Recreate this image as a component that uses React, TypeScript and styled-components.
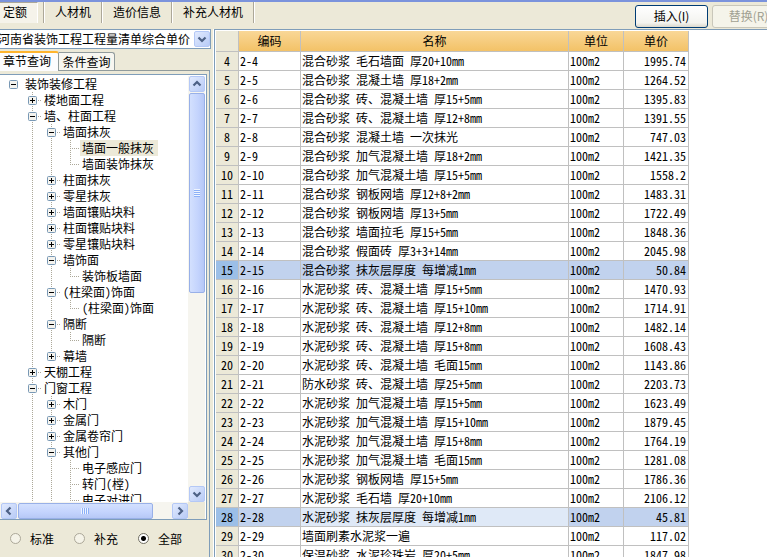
import React from 'react';
import styled, { createGlobalStyle } from 'styled-components';

const GlobalStyle = createGlobalStyle`
  * { box-sizing: border-box; }
  html, body, #root { height: 100%; }
  body { margin: 0; background: #ece9d8; overflow: hidden; }
  body, button, input, select, table {
    font: 12px/16px 'Noto Sans Mono CJK SC', 'Noto Sans CJK SC', sans-serif;
    color: #000;
  }
`;

const Page = styled.div`
  height: 100vh;
  display: flex;
  flex-direction: column;
  border-top: 2px solid #7b93dc;
  background: #ece9d8;
`;
const Toolbar = styled.header`
  height: 27px;
  flex: none;
  display: flex;
  justify-content: space-between;
  align-items: flex-start;
  overflow: hidden;
`;
const Modes = styled.nav`
  display: flex;
  flex: none;
`;
const Mode = styled.button<{ $on?: boolean }>`
  height: 21px;
  padding: 0 10px 2px 11px;
  margin: 0;
  border: 0;
  border-right: 1px solid #aca899;
  box-shadow: 1px 0 #fff;
  background: none;
  white-space: nowrap;
  ${p => p.$on && `
    width: 38px;
    padding: 0 7px 2px 0;
    margin-right: 6px;
    border-top: 1px solid #aca899;
    border-right-color: #fff;
    background: #f5f3ea;
    box-shadow: 5px 0 #ece9d8, 6px 0 #aca899, 7px 0 #fff;
  `}
`;
const Actions = styled.div`
  display: flex;
  gap: 4px;
  padding-top: 3px;
  flex: none;
  margin-right: -18px;
`;
const Action = styled.button`
  width: 73px;
  height: 23px;
  padding: 0 0 2px;
  font-family: 'Noto Sans CJK SC', sans-serif;
  border: 1px solid #003c74;
  border-radius: 3px;
  background: linear-gradient(#fff, #f3f3ef 80%, #dcd8cc);
  &:disabled {
    border-color: #c9c7ba;
    background: #f5f4ea;
    color: #a1a192;
  }
`;
const Main = styled.main`
  flex: 1;
  min-height: 0;
  display: grid;
  grid-template-columns: 214px minmax(0, 1fr);
`;
const Side = styled.aside`
  min-height: 0;
  display: flex;
  flex-direction: column;
  border-right: 1px solid #fff;
`;
const Combo = styled.div`
  height: 20px;
  width: 211px;
  flex: none;
  display: flex;
  align-items: center;
  border: 1px solid #7f9db9;
  border-left: 0;
  background: #fff;
`;
const Select = styled.select`
  flex: 1;
  min-width: 0;
  appearance: none;
  border: 0;
  padding: 0;
  margin-left: -2px;
  height: 18px;
  background: #fff;
`;
const ScrollKey = styled.span`
  width: 16px;
  height: 16px;
  flex: none;
  display: grid;
  place-items: center;
  border: 1px solid #b4c8f6;
  border-radius: 2px;
  background: linear-gradient(135deg, #e1eafe, #b8cbf6);
`;
const Tabs = styled.div`
  display: flex;
  align-items: flex-end;
  height: 20px;
  margin-top: 1px;
  flex: none;
`;
const Tab = styled.button<{ $on?: boolean }>`
  height: ${p => (p.$on ? 20 : 18)}px;
  width: ${p => (p.$on ? 59 : 56)}px;
  padding: 0;
  margin-bottom: ${p => (p.$on ? -1 : 0)}px;
  border: 1px solid #919b9c;
  border-bottom: 0;
  border-left-width: 0;
  border-radius: 0 3px 0 0;
  background: #f7f6f0;
  white-space: nowrap;
  position: relative;
  ${p => p.$on && `
    border-top: 2px solid #ffb52e;
    padding: 0 4px 2px 0;
    background: #fcfcfe;
  `}
`;
const Pane = styled.div`
  flex: 1;
  min-height: 0;
  width: 210px;
  display: flex;
  flex-direction: column;
  border-top: 1px solid #919b9c;
  border-right: 1px solid #7f9db9;
  padding: 3px 2px 0 0;
`;
const TreeBox = styled.div`
  flex: 1;
  min-height: 0;
  display: grid;
  grid-template: minmax(0, 1fr) 17px / minmax(0, 1fr) 17px;
  border: 1px solid #7f9db9;
  border-left: 0;
  background: #fff;
  padding: 1px 1px 0 0;
`;
const Tree = styled.ul`
  list-style: none;
  margin: 0;
  padding: 0;
  overflow: hidden;
`;
const Node = styled.li<{ $sel?: boolean }>`
  height: 16px;
  display: flex;
  align-items: center;
  white-space: nowrap;
  span { background: ${p => (p.$sel ? '#ece9d8' : 'none')}; padding: 0 4px 0 2px; }
  svg { flex: none; }
`;
const Track = styled.div<{ $row?: boolean }>`
  display: flex;
  flex-direction: ${p => (p.$row ? 'row' : 'column')};
  align-items: center;
  background: #f6f5ef;
  padding-left: ${p => (p.$row ? 1 : 0)}px;
`;
const Thumb = styled.div<{ $row?: boolean; $size: number }>`
  flex: 0 1 ${p => p.$size}%;
  ${p => (p.$row ? 'height' : 'width')}: 16px;
  display: grid;
  place-items: center;
  margin: ${p => (p.$row ? '0 1px' : '1px 0')};
  border: 1px solid #98b0e8;
  border-radius: 2px;
  background: linear-gradient(${p => (p.$row ? '180deg' : '90deg')}, #d3e0fe, #c3d3fd 60%, #b6c8f6);
`;
const Spacer = styled.div`
  flex: 1;
`;
const Corner = styled.div`
  background: #ece9d8;
`;
const Filters = styled.div`
  height: 37px;
  flex: none;
  display: flex;
  align-items: center;
  gap: 20px;
  padding-left: 10px;
  label { display: flex; align-items: center; gap: 9px; }
`;
const Radio = styled.input`
  appearance: none;
  width: 11px;
  height: 11px;
  margin: 0;
  border: 1px solid #aca899;
  border-radius: 50%;
  background: #f5f3e8;
  &:checked {
    border-color: #716f64;
    background: radial-gradient(circle, #000 0 2px, #fff 3px);
  }
`;
const GridBox = styled.section`
  min-width: 0;
  overflow: hidden;
  border: 1px solid #7f9db9;
  border-width: 1px 0 0 1px;
  background: #fff;
  padding: 1px 0 0 1px;
`;
const Table = styled.table`
  table-layout: fixed;
  width: 473px;
  border-collapse: separate;
  border-spacing: 0;
  th, td {
    border: 0 solid #c0c0c0;
    border-width: 0 1px 1px 0;
    overflow: hidden;
    white-space: nowrap;
    font-weight: normal;
  }
  thead th {
    height: 21px;
    padding: 0;
    background: linear-gradient(#f9d797, #f3c267);
  }
  thead th:first-child { background: #ece9d8; }
`;
const Row = styled.tr<{ $hot?: boolean; $focus?: boolean }>`
  th, td {
    height: 19px;
    padding: 0 2px 0 1px;
    text-align: left;
    background: ${p => (p.$hot ? '#c1d2ee' : '#fff')};
  }
  th { text-align: center; padding: 0; background: ${p => (p.$hot ? '#9cbfe7' : '#ece9d8')}; }
  td:nth-child(3) { ${p => p.$focus && 'background: #dfe9f7;'} }
  td:nth-child(5) { text-align: right; }
`;

const Arrow = ({ turn = 0 }: { turn?: number }) => (
  <svg width="10" height="10" viewBox="0 0 10 10" aria-hidden="true">
    <path d="M1.5 3.5 5 7 8.5 3.5" transform={`rotate(${turn} 5 5)`} fill="none" stroke="#4d6185" strokeWidth="2.2" />
  </svg>
);
const Grip = ({ turn = 0 }: { turn?: number }) => (
  <svg width="8" height="8" viewBox="0 0 8 8" aria-hidden="true">
    <g transform={`rotate(${turn} 4 4)`}>
      <path d="M1 .5h6M1 2.5h6M1 4.5h6M1 6.5h6" stroke="#eef4fe" />
      <path d="M1 1.5h6M1 3.5h6M1 5.5h6M1 7.5h6" stroke="#8cb0f8" />
    </g>
  </svg>
);

type Item = { t: string; d: number; k?: '+' | '-'; end?: boolean };
const items: Item[] = [
  { t: '装饰装修工程', d: 0, k: '-' },
  { t: '楼地面工程', d: 1, k: '+' },
  { t: '墙、柱面工程', d: 1, k: '-' },
  { t: '墙面抹灰', d: 2, k: '-' },
  { t: '墙面一般抹灰', d: 3 },
  { t: '墙面装饰抹灰', d: 3, end: true },
  { t: '柱面抹灰', d: 2, k: '+' },
  { t: '零星抹灰', d: 2, k: '+' },
  { t: '墙面镶贴块料', d: 2, k: '+' },
  { t: '柱面镶贴块料', d: 2, k: '+' },
  { t: '零星镶贴块料', d: 2, k: '+' },
  { t: '墙饰面', d: 2, k: '-' },
  { t: '装饰板墙面', d: 3, end: true },
  { t: '(柱梁面)饰面', d: 2, k: '-' },
  { t: '(柱梁面)饰面', d: 3, end: true },
  { t: '隔断', d: 2, k: '-' },
  { t: '隔断', d: 3, end: true },
  { t: '幕墙', d: 2, k: '+', end: true },
  { t: '天棚工程', d: 1, k: '+' },
  { t: '门窗工程', d: 1, k: '-' },
  { t: '木门', d: 2, k: '+' },
  { t: '金属门', d: 2, k: '+' },
  { t: '金属卷帘门', d: 2, k: '+' },
  { t: '其他门', d: 2, k: '-' },
  { t: '电子感应门', d: 3 },
  { t: '转门(樘)', d: 3 },
  { t: '电子对进门', d: 3 },
];

const Branch = ({ d, k, end }: Item) => {
  const x = 13 + d * 19;
  const w = x + 10;
  const guides: number[] = [];
  for (let i = 1; i < d; i++) guides.push(13 + i * 19);
  return (
    <svg width={w} height="16" viewBox={`0 0 ${w} 16`} aria-hidden="true">
      <g stroke="#aca899" strokeDasharray="1 1" fill="none">
        {guides.map(g => <path key={g} d={`M${g + 0.5} 0V16`} />)}
        {d > 0 && <path d={`M${x + 0.5} 0V${end ? 8 : 16}`} />}
        {d > 0 && <path d={`M${x} 8.5H${w - 1}`} />}
      </g>
      {k && (
        <g>
          <rect x={x - 3.5} y="4.5" width="8" height="8" rx="1" fill="#f4f3ee" stroke="#7898b5" />
          <path d={`M${x - 2} 8.5h5${k === '+' ? `M${x + 0.5} 6v5` : ''}`} stroke="#000" />
        </g>
      )}
    </svg>
  );
};

const rows: [string, string][] = [
  ['混合砂浆 毛石墙面 厚20+10mm', '1995.74'],
  ['混合砂浆 混凝土墙 厚18+2mm', '1264.52'],
  ['混合砂浆 砖、混凝土墙 厚15+5mm', '1395.83'],
  ['混合砂浆 砖、混凝土墙 厚12+8mm', '1391.55'],
  ['混合砂浆 混凝土墙 一次抹光', '747.03'],
  ['混合砂浆 加气混凝土墙 厚18+2mm', '1421.35'],
  ['混合砂浆 加气混凝土墙 厚15+5mm', '1558.2'],
  ['混合砂浆 钢板网墙 厚12+8+2mm', '1483.31'],
  ['混合砂浆 钢板网墙 厚13+5mm', '1722.49'],
  ['混合砂浆 墙面拉毛 厚15+5mm', '1848.36'],
  ['混合砂浆 假面砖 厚3+3+14mm', '2045.98'],
  ['混合砂浆 抹灰层厚度 每增减1mm', '50.84'],
  ['水泥砂浆 砖、混凝土墙 厚15+5mm', '1470.93'],
  ['水泥砂浆 砖、混凝土墙 厚15+10mm', '1714.91'],
  ['水泥砂浆 砖、混凝土墙 厚12+8mm', '1482.14'],
  ['水泥砂浆 砖、混凝土墙 厚15+8mm', '1608.43'],
  ['水泥砂浆 砖、混凝土墙 毛面15mm', '1143.86'],
  ['防水砂浆 砖、混凝土墙 厚25+5mm', '2203.73'],
  ['水泥砂浆 加气混凝土墙 厚15+5mm', '1623.49'],
  ['水泥砂浆 加气混凝土墙 厚15+10mm', '1879.45'],
  ['水泥砂浆 加气混凝土墙 厚15+8mm', '1764.19'],
  ['水泥砂浆 加气混凝土墙 毛面15mm', '1281.08'],
  ['水泥砂浆 钢板网墙 厚15+5mm', '1786.36'],
  ['水泥砂浆 毛石墙 厚20+10mm', '2106.12'],
  ['水泥砂浆 抹灰层厚度 每增减1mm', '45.81'],
  ['墙面刷素水泥浆一遍', '117.02'],
  ['保温砂浆 水泥珍珠岩 厚20+5mm', '1847.98'],
];

export default function App() {
  return (
    <Page>
      <GlobalStyle />
      <Toolbar>
        <Modes>
          <Mode $on>定额</Mode>
          <Mode>人材机</Mode>
          <Mode>造价信息</Mode>
          <Mode>补充人材机</Mode>
        </Modes>
        <Actions>
          <Action>插入(I)</Action>
          <Action disabled>替换(R)</Action>
        </Actions>
      </Toolbar>
      <Main>
        <Side>
          <Combo>
            <Select aria-label="定额库">
              <option>河南省装饰工程工程量清单综合单价</option>
            </Select>
            <ScrollKey><Arrow /></ScrollKey>
          </Combo>
          <Tabs role="tablist">
            <Tab role="tab" aria-selected $on>章节查询</Tab>
            <Tab role="tab">条件查询</Tab>
          </Tabs>
          <Pane>
            <TreeBox>
              <Tree role="tree">
                {items.map((it, i) => (
                  <Node key={i} role="treeitem" $sel={i === 4}>
                    <Branch {...it} />
                    <span>{it.t}</span>
                  </Node>
                ))}
              </Tree>
              <Track>
                <ScrollKey><Arrow turn={180} /></ScrollKey>
                <Thumb $size={47}><Grip /></Thumb>
                <Spacer />
                <ScrollKey><Arrow /></ScrollKey>
              </Track>
              <Track $row>
                <ScrollKey><Arrow turn={90} /></ScrollKey>
                <Thumb $row $size={72}><Grip turn={-90} /></Thumb>
                <Spacer />
                <ScrollKey><Arrow turn={-90} /></ScrollKey>
              </Track>
              <Corner />
            </TreeBox>
            <Filters>
              <label><Radio type="radio" name="scope" />标准</label>
              <label><Radio type="radio" name="scope" />补充</label>
              <label><Radio type="radio" name="scope" defaultChecked />全部</label>
            </Filters>
          </Pane>
        </Side>
        <GridBox>
          <Table>
            <colgroup>
              <col width="23" /><col width="62" /><col width="268" /><col width="55" /><col width="65" />
            </colgroup>
            <thead>
              <tr><th /><th>编码</th><th>名称</th><th>单位</th><th>单价</th></tr>
            </thead>
            <tbody>
              {rows.map(([name, price], i) => (
                <Row key={i} $hot={i === 11 || i === 24} $focus={i === 24}>
                  <th scope="row">{i + 4}</th>
                  <td>2-{i + 4}</td>
                  <td>{name}</td>
                  <td>100m2</td>
                  <td>{price}</td>
                </Row>
              ))}
            </tbody>
          </Table>
        </GridBox>
      </Main>
    </Page>
  );
}
